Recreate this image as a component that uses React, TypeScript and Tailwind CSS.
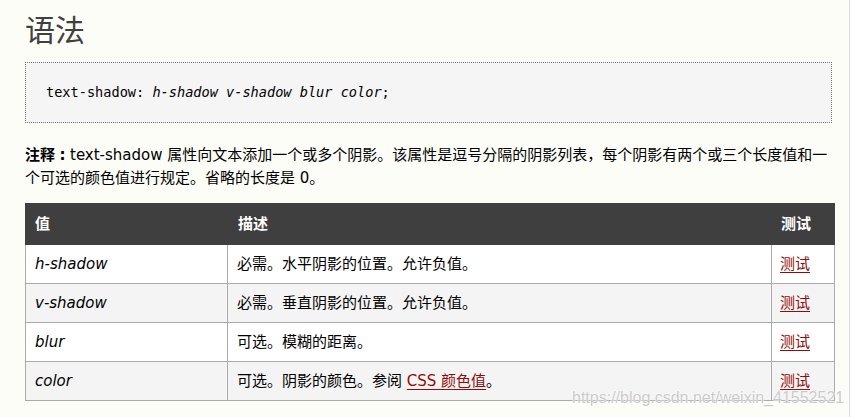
import React from "react";

const sans = "font-['DejaVu_Sans','Noto_Sans_CJK_SC',sans-serif]";

const rows = [
  { v: "h-shadow", d: <>必需。水平阴影的位置。允许负值。</> },
  { v: "v-shadow", d: <>必需。垂直阴影的位置。允许负值。</> },
  { v: "blur", d: <>可选。模糊的距离。</> },
  {
    v: "color",
    d: (
      <>
        可选。阴影的颜色。参阅{" "}
        <a className="text-[#900b09] underline underline-offset-[3px]" href="#">
          CSS 颜色值
        </a>
        。
      </>
    ),
  },
];

export default function App() {
  return (
    <div className={`relative flex w-[851px] h-[417px] overflow-hidden bg-[#fdfdf8] ${sans}`}>
      <div className="w-[849px] pl-[25px]">
        <h2 className="mt-[10px] text-[30px] leading-[36px] font-normal text-[#404040] font-['Noto_Sans_CJK_SC',sans-serif]">
          语法
        </h2>
        <div className="mt-[16px] w-[807px] border border-dotted border-[#777] bg-[#f5f5f5] px-[20px] py-[19px] leading-[21px] text-[13.6px] text-black font-['DejaVu_Sans_Mono',monospace]">
          text-shadow: <i>h-shadow v-shadow blur color</i>;
        </div>
        <p className="mt-[21px] w-[810px] text-[15px] leading-[22.5px] text-black">
          <b>注释</b>
          <b className="inline-block w-[15px] text-center">:</b>text-shadow 属性向文本添加一个或多个阴影。该属性是逗号分隔的阴影列表，每个阴影有两个或三个长度值和一个可选的颜色值进行规定。省略的长度是 0。
        </p>
        <div className="mt-[14px] w-[810px] text-[15px] text-black">
          <div className="flex h-[42px] items-center bg-[#3f3f3f] text-white font-bold">
            <div className="w-[203px] pl-[10px]">值</div>
            <div className="w-[544px] pl-[10px]">描述</div>
            <div className="flex-1 pl-[9px]">测试</div>
          </div>
          <div className="border-x border-[#aaa]">
            {rows.map((r, i) => (
              <div
                key={r.v}
                className={`flex h-[39px] border-b border-[#aaa] ${i % 2 === 1 ? "bg-[#f4f4f4]" : "bg-white"}`}
              >
                <div className="flex w-[202px] items-center border-r border-[#aaa] pl-[9px] italic">
                  {r.v}
                </div>
                <div className="flex w-[544px] items-center border-r border-[#aaa] pl-[9px]">
                  <span>{r.d}</span>
                </div>
                <div className="flex flex-1 items-center pl-[8px]">
                  <a className="text-[#900b09] underline underline-offset-[3px]" href="#">
                    测试
                  </a>
                </div>
              </div>
            ))}
          </div>
        </div>
      </div>
      <div className="w-[1px] bg-[#dcdcdc]" />
      <div className="w-[1px] bg-[#fafafa]" />
      <div className="absolute left-[572px] top-[390px] text-[16px] leading-none text-[rgba(185,185,185,0.75)] font-['Liberation_Sans',sans-serif] [text-shadow:0_0_1px_#fff,0_0_2px_#fff]">
        https://blog.csdn.net/weixin_41552521
      </div>
    </div>
  );
}
